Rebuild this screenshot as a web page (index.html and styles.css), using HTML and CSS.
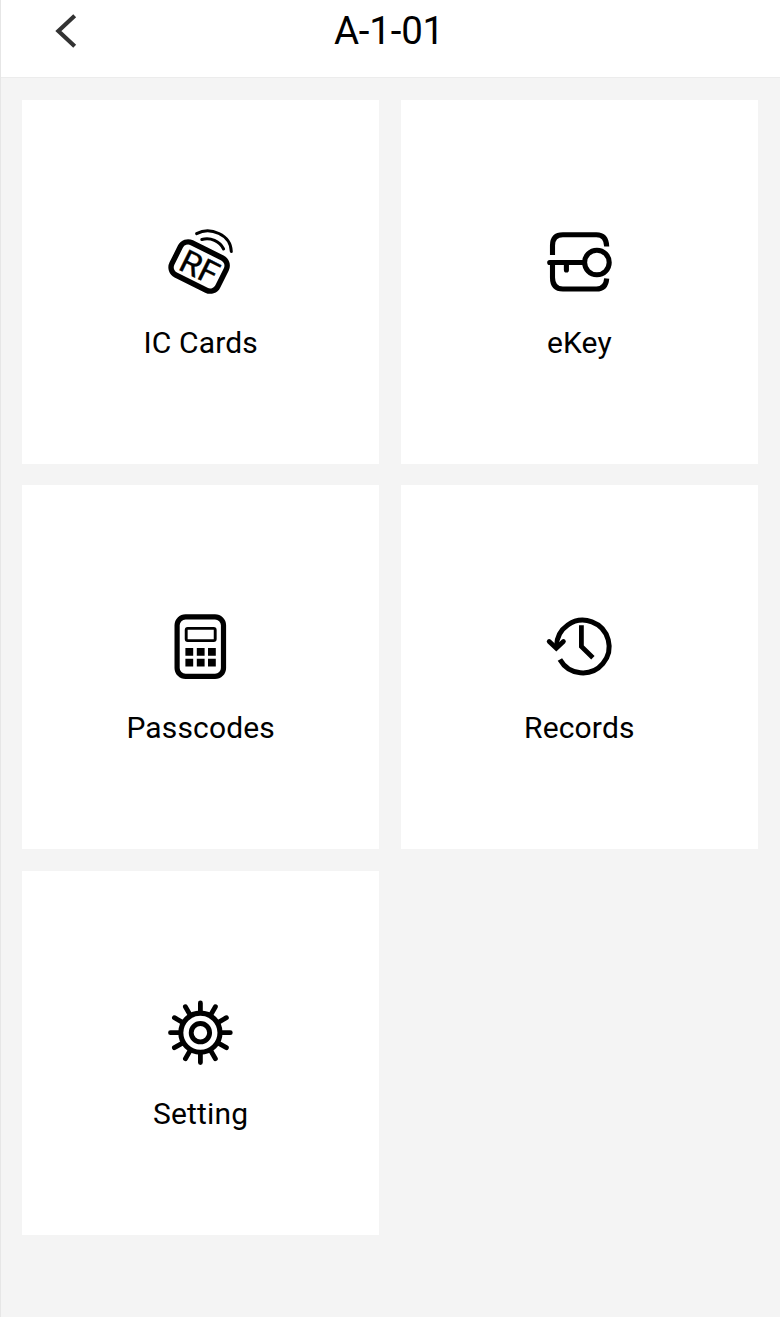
FILE: index.html
```
<!DOCTYPE html>
<html lang="en">

<head>
    <meta charset="UTF-8" />
    <title>A-1-01</title>
    <meta name="viewport" content="width=device-width, initial-scale=1.0" />
    <link rel="stylesheet" href="styles.css">
</head>

<body>

    <!-- Top bar -->
    <header class="top-bar">
        <a class="back" href="#" aria-label="Back">
            <svg viewBox="0 0 30 40" width="30" height="40">
                <path d="M23.7 4.8 7.4 20 23.7 35.2" />
            </svg>
        </a>
        <h1>A-1-01</h1>
    </header>

    <!-- Menu -->
    <main class="menu">
        <a class="card" href="#">
            <svg class="icon" viewBox="14.7 11 72 72">
                <rect x="-25.6" y="-18" width="51.2" height="36" rx="8.5" stroke-width="5.4" transform="translate(48.8 51.5) rotate(26.5)" />
                <text class="rf" x="-18.8" y="12" textLength="39" lengthAdjust="spacingAndGlyphs" transform="translate(49 51.3) rotate(26.5)">RF</text>
                <path d="M46.3 18.6C60 11.5 80.5 19.5 81 36.5M51.5 24.5C60 22 69.5 26 73.3 34" stroke-width="3" />
            </svg>
            <span>IC Cards</span>
        </a>
        <a class="card" href="#">
            <svg class="icon" viewBox="13.1 11 72 72">
                <path d="M22.6 40V30.5Q22.6 19.8 33 19.8H66.5Q76.4 19.8 76.8 31.5M22.6 50V62.5Q22.6 74 33 74H66.5Q76 74 76.8 63.5" stroke-width="5.1" stroke-linecap="butt" />
                <circle cx="67" cy="47.5" r="12.3" stroke-width="5.1" />
                <path d="M19.8 47.5H54M36.5 48V55" stroke-width="5.1" />
            </svg>
            <span>eKey</span>
        </a>
        <a class="card" href="#">
            <svg class="icon" viewBox="14.9 11.5 72 72">
                <rect x="27" y="17.3" width="46.4" height="59.6" rx="8.5" stroke-width="5.2" />
                <rect x="36.1" y="28.9" width="29" height="12.2" rx="1.5" stroke-width="2.9" />
                <path class="solid" d="M35.3 48.5h7.8v7.8h-7.8zM46.7 48.5h7.8v7.8h-7.8zM57.9 48.5h7.8v7.8h-7.8zM35.3 59.2h7.8v7.8h-7.8zM46.7 59.2h7.8v7.8h-7.8zM57.9 59.2h7.8v7.8h-7.8z" />
            </svg>
            <span>Passcodes</span>
        </a>
        <a class="card" href="#">
            <svg class="icon" viewBox="13.3 12 72 72">
                <path d="M26.8 47.5A26.3 26.3 0 1 1 30.2 60.5" stroke-width="5" stroke-linecap="butt" />
                <path d="M19.5 42.5 26.6 49.3 33.7 42.5" stroke-width="4.8" stroke-linejoin="miter" />
                <path d="M51.7 26.2V47.5L63.2 58.8" stroke-width="4.8" stroke-linecap="butt" stroke-linejoin="miter" />
            </svg>
            <span>Records</span>
        </a>
        <a class="card" href="#">
            <svg class="icon" viewBox="14.9 10 72 72">
                <circle cx="50.3" cy="45.7" r="19.6" stroke-width="5.1" />
                <circle cx="50.3" cy="45.7" r="9.2" stroke-width="4.9" />
                <path d="M50.3 25.5V15.9M50.3 66V75.5M30 45.7H20.4M70.5 45.7H80.2M60.4 28.2 65.3 19.7M67.8 35.6 76.3 30.7M67.8 55.8 76.3 60.7M60.4 63.2 65.3 71.7M40.2 63.2 35.3 71.7M32.8 55.8 24.3 60.7M32.8 35.6 24.3 30.7M40.2 28.2 35.3 19.7" stroke-width="4.8" />
            </svg>
            <span>Setting</span>
        </a>
    </main>

</body>

</html>
```

FILE: styles.css
```
* {
    box-sizing: border-box;
}

body {
    margin: 0;
    min-height: 100vh;
    font-family: Roboto, "Liberation Sans", sans-serif;
    color: #000;
    background: #f4f4f4;
    border-left: 1px solid #e6e6e6;
}

.top-bar {
    display: grid;
    grid-template-columns: 80px 1fr 80px;
    align-items: center;
    height: 78px;
    padding: 0 3px 16px 0;
    background: #fff;
    border-bottom: 1px solid #ececec;
}

.back {
    display: flex;
    justify-content: flex-end;
}

.back svg {
    fill: none;
    stroke: #333;
    stroke-width: 4.2;
}

.top-bar h1 {
    margin: 0;
    font-size: 38.5px;
    font-weight: 400;
    line-height: 60px;
    letter-spacing: -0.2px;
    text-align: center;
}

.menu {
    display: grid;
    grid-template-columns: 1fr 1fr;
    grid-auto-rows: 364px;
    gap: 21.4px;
    padding: 22px 22px 22px 21px;
}

.card {
    display: flex;
    flex-direction: column;
    align-items: center;
    padding-top: 126px;
    background: #fff;
    color: inherit;
    font-size: 30px;
    line-height: 36px;
    letter-spacing: 0.15px;
    text-decoration: none;
}

.icon {
    width: 72px;
    height: 72px;
    margin-bottom: 27px;
    fill: none;
    stroke: #000;
    stroke-linecap: round;
    stroke-linejoin: round;
}

.icon .solid {
    fill: #000;
    stroke: none;
}

.icon .rf {
    fill: #000;
    stroke-width: 0.4;
    font-size: 32px;
    letter-spacing: 0;
}
```
